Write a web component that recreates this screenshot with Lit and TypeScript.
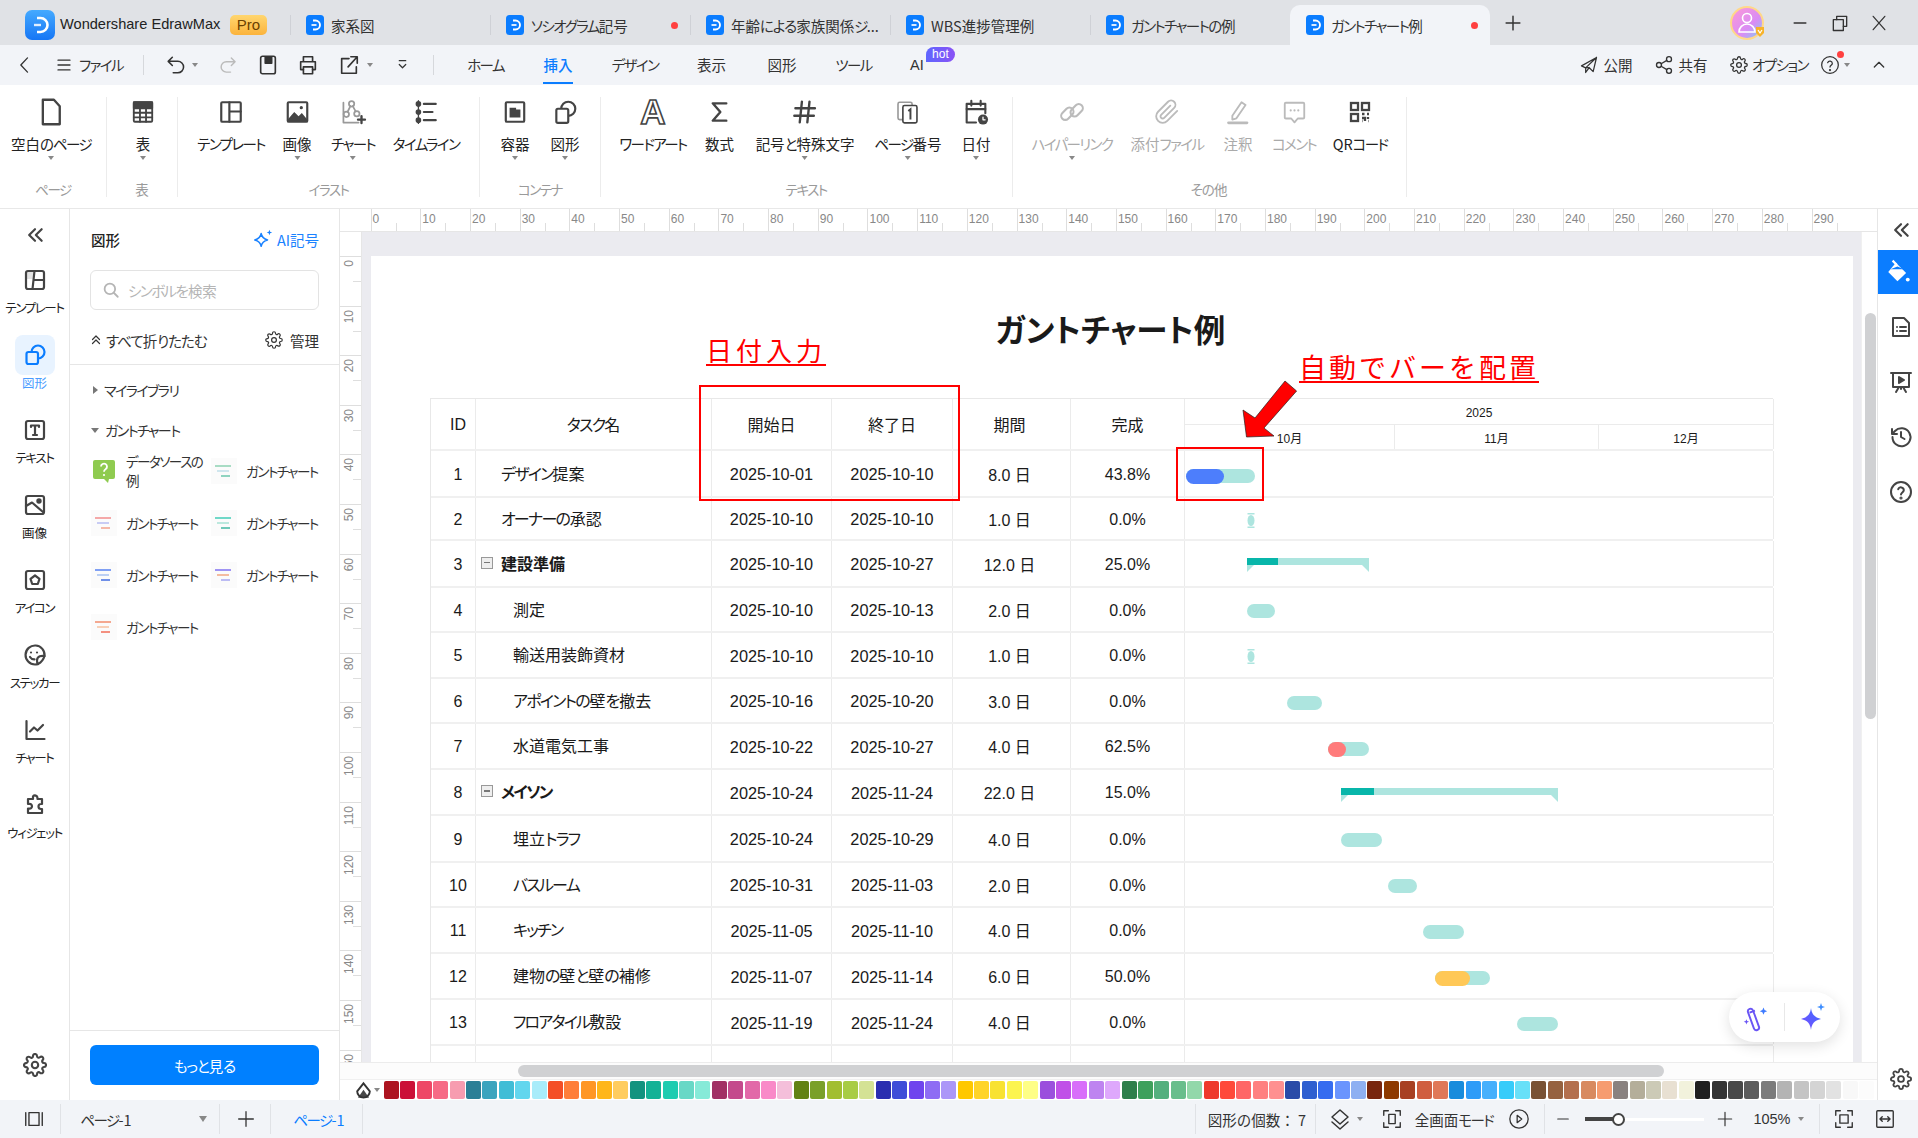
import { LitElement, html, svg, css } from "lit";
import { customElement } from "lit/decorators.js";

type Cell = [number, number, unknown];
const flowRow = (cells: Cell[], origin = 0) => {
  let cur = origin;
  return cells.map(([x, w, c]) => {
    const m = x - cur;
    cur = x + w;
    return html`<div class="cell" style="margin-left:${m}px;width:${w}px">${c}</div>`;
  });
};
const at = (cx: number, w: number, c: unknown): Cell => [cx - w / 2, w, c];

// Kana in the reference is set much tighter than kanji: wrap each run so it can be tightened.
const T = (s: string) =>
  s.split(/([\u30A0-\u30FF]+|[\u3040-\u309F]+)/).map((p) => {
    if (!p) return "";
    if (/^[\u30A0-\u30FF]/.test(p)) return html`<span class="k">${p}</span>`;
    if (/^[\u3040-\u309F]/.test(p)) return html`<span class="h">${p}</span>`;
    return p;
  });

const ico = (inner: unknown, size = 24, sw = 2) =>
  html`<svg width=${size} height=${size} viewBox="0 0 24 24" fill="none" stroke="currentColor" stroke-width=${sw} stroke-linecap="round" stroke-linejoin="round">${inner}</svg>`;

const gearP = svg`<circle cx="12" cy="12" r="3.2"/><path d="M19.4 15a1.65 1.65 0 0 0 .33 1.82l.06.06a2 2 0 0 1 0 2.83 2 2 0 0 1-2.83 0l-.06-.06a1.65 1.65 0 0 0-1.82-.33 1.65 1.65 0 0 0-1 1.51V21a2 2 0 0 1-2 2 2 2 0 0 1-2-2v-.09A1.65 1.65 0 0 0 9 19.4a1.65 1.65 0 0 0-1.82.33l-.06.06a2 2 0 0 1-2.83 0 2 2 0 0 1 0-2.83l.06-.06a1.65 1.65 0 0 0 .33-1.82 1.65 1.65 0 0 0-1.51-1H3a2 2 0 0 1-2-2 2 2 0 0 1 2-2h.09A1.65 1.65 0 0 0 4.6 9a1.65 1.65 0 0 0-.33-1.82l-.06-.06a2 2 0 0 1 0-2.83 2 2 0 0 1 2.83 0l.06.06a1.65 1.65 0 0 0 1.82.33H9a1.65 1.65 0 0 0 1-1.51V3a2 2 0 0 1 2-2 2 2 0 0 1 2 2v.09a1.65 1.65 0 0 0 1 1.51 1.65 1.65 0 0 0 1.82-.33l.06-.06a2 2 0 0 1 2.83 0 2 2 0 0 1 0 2.83l-.06.06a1.65 1.65 0 0 0-.33 1.82V9a1.65 1.65 0 0 0 1.51 1H21a2 2 0 0 1 2 2 2 2 0 0 1-2 2h-.09a1.65 1.65 0 0 0-1.51 1z"/>`;
const dbl = svg`<path d="M12 5l-7 7 7 7M20 5l-7 7 7 7"/>`;
const help = svg`<circle cx="12" cy="12" r="10"/><path d="M9.2 9.2a2.9 2.9 0 0 1 5.6 1c0 2-2.8 2.4-2.8 4.2"/><circle cx="12" cy="18" r=".6"/>`;

const R: Record<string, unknown> = {
  blank: ico(svg`<path d="M5 1.5h9.5L19.5 7v15.5H5z"/>`, 28, 2),
  table: ico(svg`<rect x="3.5" y="3" width="17" height="18" rx="1"/><rect x="3.5" y="3" width="17" height="5.5" fill="currentColor"/><path d="M9.2 8.5V21M14.8 8.5V21M3.5 12.7h17M3.5 16.9h17" stroke-width="1.7"/>`, 26, 1.7),
  tmpl: ico(svg`<rect x="3" y="3" width="18" height="18" rx="1"/><path d="M10.5 3v18M10.5 11.5H21"/>`, 26, 2),
  image: ico(svg`<rect x="3" y="3" width="18" height="18" rx="1"/><path d="M3 19l6-7 4 4 3-3 5 6v2H3z" fill="currentColor" stroke="none"/><circle cx="15.5" cy="8" r="1.5" fill="currentColor" stroke="none"/>`, 26, 2),
  chart: ico(svg`<g stroke="#9a9a9a" stroke-width="1.5"><path d="M4 4v17h13"/><circle cx="11" cy="5" r="2.3"/><circle cx="6.5" cy="14" r="2.3"/><circle cx="15.5" cy="13.5" r="2.3"/><path d="M10 7l-2.5 5M12 7l2.5 4.5"/></g><path d="M19.5 15.5v6M16.5 18.5h6" stroke-width="2"/>`, 28, 2),
  timeline: ico(svg`<circle cx="5" cy="4.5" r="1.6" fill="currentColor"/><circle cx="5" cy="12" r="1.6" fill="currentColor"/><circle cx="5" cy="19.5" r="1.6" fill="currentColor"/><path d="M5 1.5v21" stroke-width="1.2"/><path d="M10 4.5h11M10 12h8M10 19.5h11"/>`, 26, 2),
  container: ico(svg`<rect x="3.5" y="3" width="17" height="18" rx="1"/><path d="M7 8h6v1.8h4V17H7z" fill="currentColor" stroke="none"/>`, 26, 2),
  shape: ico(svg`<circle cx="15" cy="9" r="6.5"/><rect x="4" y="9" width="11" height="13" rx="1.5" fill="#fff"/>`, 26, 2),
  wordart: html`<span class="wa">A</span>`,
  sum: ico(svg`<path d="M18.5 4H6l7 8-7 8h12.5"/>`, 26, 2.2),
  hash: ico(svg`<path d="M9.5 2.5L7.5 21.5M16.5 2.5l-2 19M3.5 8.5h18M2.5 15.5h18"/>`, 26, 2.2),
  pagenum: html`<svg width="26" height="26" viewBox="0 0 24 24" fill="none" stroke="currentColor" stroke-width="1.5"><rect x="3" y="3" width="13" height="16" rx="1.5" stroke="#999"/><rect x="7.5" y="6" width="13" height="16" rx="1.5" fill="#fff"/><path d="M12.500 11l2-1.500V19" stroke-width="1.800"/></svg>`,
  date: ico(svg`<path d="M12 21H4V5h16v8"/><path d="M4 9.5h16M8 2.5v4M16 2.5v4"/><circle cx="18" cy="18.5" r="4.3" fill="currentColor" stroke="none"/><path d="M18 16.5v2.2h1.8" stroke="#fff" stroke-width="1.1"/>`, 28, 1.8),
  link: ico(svg`<rect x="2" y="10" width="12" height="7" rx="3.5" transform="rotate(-45 8 13.5)"/><rect x="10" y="7" width="12" height="7" rx="3.5" transform="rotate(-45 16 10.5)"/>`, 28, 1.8),
  clip: ico(svg`<path d="M21.44 11.05l-9.19 9.19a6 6 0 0 1-8.49-8.49l9.19-9.19a4 4 0 0 1 5.66 5.66l-9.2 9.19a2 2 0 0 1-2.83-2.83l8.49-8.48"/>`, 26, 1.7),
  note: ico(svg`<path d="M7 15.5L15.5 3l3.7 2.5-8.4 12.3L7 19z"/><path d="M3.5 22h17" stroke-width="2.6"/>`, 26, 1.7),
  comment: ico(svg`<path d="M4 3.5h16a1 1 0 0 1 1 1V17a1 1 0 0 1-1 1h-5l-3 3.5L9 18H4a1 1 0 0 1-1-1V4.5a1 1 0 0 1 1-1z"/><path d="M8.5 10.5h.01M12 10.5h.01M15.5 10.5h.01" stroke-width="2"/>`, 26, 1.7),
  qr: html`<svg width="24" height="24" viewBox="0 0 24 24" fill="none" stroke="currentColor" stroke-width="2.3"><rect x="3" y="3" width="7" height="7"/><rect x="14" y="3" width="7" height="7"/><rect x="3" y="14" width="7" height="7"/><path d="M14 14h2.5M19 14h2M14 18h3v3M20 17v2M14 21h.5M20.5 21h.5"/></svg>`,
};

const groups = [
  { name: "ページ", from: 0, to: 107, items: [["空白のページ", 51, "blank", 1]] },
  { name: "表", from: 107, to: 178, items: [["表", 143, "table", 1]] },
  { name: "イラスト", from: 178, to: 480, items: [["テンプレート", 231, "tmpl", 0], ["画像", 297, "image", 1], ["チャート", 353, "chart", 1], ["タイムライン", 426, "timeline", 0]] },
  { name: "コンテナ", from: 480, to: 601, items: [["容器", 515, "container", 1], ["図形", 565, "shape", 1]] },
  { name: "テキスト", from: 601, to: 1012.5, items: [["ワードアート", 653, "wordart", 0], ["数式", 719.5, "sum", 0], ["記号と特殊文字", 805, "hash", 1], ["ページ番号", 908, "pagenum", 1], ["日付", 976, "date", 1]] },
  { name: "その他", from: 1012.5, to: 1406.5, items: [["ハイパーリンク", 1072, "link", 1, 1], ["添付ファイル", 1167, "clip", 0, 1], ["注釈", 1238, "note", 0, 1], ["コメント", 1294, "comment", 0, 1], ["QRコード", 1360, "qr", 0]] },
] as { name: string; from: number; to: number; items: any[][] }[];

const swatches = ("#AD1420,#CB1038,#EE4766,#F66A85,#F79CB0,#2B7F96,#3AA4BE,#40BDD6,#62D6EE,#A8ECFA,#F44E26,#FF7E3A,#FF9624,#FFB61A,#FFCC5E,#12937F,#14B296,#1DCCB0,#68D8C6,#86EAD8,#A23064,#C44A8C,#E269A8,#F98AC8,#F4BFDA,#628214,#7AA028,#A2BE30,#A8CC44,#D4E294,#2A2EB0,#3E4CD8,#6F44EE,#8E6CF4,#AC96F8,#FFC800,#FFD428,#F8E232,#FCF44E,#FEFE86,#9B4FDD,#C050E8,#D86EFA,#BE84F0,#DEA8FC,#2E7F4A,#3EA05C,#54B07E,#68BE8C,#92D8AA,#EE3A2C,#FF4A3A,#FF6666,#FF8080,#FF9090,#2A4BA8,#2F5FD0,#366CF0,#6A94FE,#8EB0F2,#78260E,#8E3A00,#A84022,#D05E40,#E07858,#188CDC,#2E9CF8,#46B0FC,#36CCFA,#68E0F8,#7A5234,#966240,#B4704E,#D88A60,#F69C70,#8A8280,#B4AE9A,#CCCAB6,#E8E0D2,#F2F2DC,#202020,#343434,#484848,#5C5C5C,#7C7C7C,#B4B4B4,#C4C4C4,#D4D4D4,#E2E2E2,#F8F8F8,#FCFCFC").split(",");

type Bar = { k: "pill" | "ms" | "sum"; x0: number; x1: number; y: number; p?: number; c?: string };
const rows: { id: number; name: string; lvl: number; s: string; e: string; d: string; pc: string; h: number; bar?: Bar }[] = [
  { id: 1, name: "デザイン提案", lvl: 0, s: "2025-10-01", e: "2025-10-10", d: "8.0 日", pc: "43.8%", h: 47, bar: { k: "pill", x0: 1185, x1: 1254, y: 468, p: 1223, c: "#4d7efc" } },
  { id: 2, name: "オーナーの承認", lvl: 0, s: "2025-10-10", e: "2025-10-10", d: "1.0 日", pc: "0.0%", h: 43, bar: { k: "ms", x0: 1246, x1: 1253, y: 512 } },
  { id: 3, name: "建設準備", lvl: 1, s: "2025-10-10", e: "2025-10-27", d: "12.0 日", pc: "25.0%", h: 47, bar: { k: "sum", x0: 1246, x1: 1368, y: 557, p: 1276.5 } },
  { id: 4, name: "測定", lvl: 2, s: "2025-10-10", e: "2025-10-13", d: "2.0 日", pc: "0.0%", h: 45, bar: { k: "pill", x0: 1246, x1: 1274, y: 603 } },
  { id: 5, name: "輸送用装飾資材", lvl: 2, s: "2025-10-10", e: "2025-10-10", d: "1.0 日", pc: "0.0%", h: 46, bar: { k: "ms", x0: 1246, x1: 1253, y: 648 } },
  { id: 6, name: "アポイントの壁を撤去", lvl: 2, s: "2025-10-16", e: "2025-10-20", d: "3.0 日", pc: "0.0%", h: 45, bar: { k: "pill", x0: 1286, x1: 1321, y: 695 } },
  { id: 7, name: "水道電気工事", lvl: 2, s: "2025-10-22", e: "2025-10-27", d: "4.0 日", pc: "62.5%", h: 46, bar: { k: "pill", x0: 1327, x1: 1368, y: 741, p: 1345, c: "#ff7b7b" } },
  { id: 8, name: "メイソン", lvl: 1, s: "2025-10-24", e: "2025-11-24", d: "22.0 日", pc: "15.0%", h: 46, bar: { k: "sum", x0: 1340, x1: 1557, y: 787, p: 1373 } },
  { id: 9, name: "埋立トラフ", lvl: 2, s: "2025-10-24", e: "2025-10-29", d: "4.0 日", pc: "0.0%", h: 47, bar: { k: "pill", x0: 1340, x1: 1381, y: 832 } },
  { id: 10, name: "バスルーム", lvl: 2, s: "2025-10-31", e: "2025-11-03", d: "2.0 日", pc: "0.0%", h: 45, bar: { k: "pill", x0: 1387, x1: 1416, y: 878 } },
  { id: 11, name: "キッチン", lvl: 2, s: "2025-11-05", e: "2025-11-10", d: "4.0 日", pc: "0.0%", h: 46, bar: { k: "pill", x0: 1422, x1: 1463, y: 924 } },
  { id: 12, name: "建物の壁と壁の補修", lvl: 2, s: "2025-11-07", e: "2025-11-14", d: "6.0 日", pc: "50.0%", h: 46, bar: { k: "pill", x0: 1434, x1: 1488.5, y: 970, p: 1469, c: "#ffc857" } },
  { id: 13, name: "フロアタイル敷設", lvl: 2, s: "2025-11-19", e: "2025-11-24", d: "4.0 日", pc: "0.0%", h: 46, bar: { k: "pill", x0: 1516, x1: 1557, y: 1016 } },
];

const thumbs = ["#a8dcc4,#cfe6ee,#8fd4c0", "#f4a8a8,#c8ccf4,#f4b8a8", "#70d8c8,#bce8de,#70c8b8", "#80a0f4,#bcd0f4,#7090e8", "#a094f4,#f4bca0,#bcbcf4", "#f4a890,#f8d0b8,#f49080"];
const thumb = (cs: string) => {
  const [a, b, c] = cs.split(",");
  return html`<svg width="26" height="26" viewBox="0 0 26 26" style="flex:none"><rect width="26" height="26" fill="#fbfbfb"/><rect x="4" y="7" width="16" height="2" fill=${a}/><rect x="6" y="12" width="12" height="2" fill=${b}/><rect x="10" y="17" width="9" height="2" fill=${c}/></svg>`;
};
const tabLogo = html`<svg class="tablogo" width="18" height="20" viewBox="0 0 18 20"><rect width="18" height="20" rx="3.5" fill="#0b7dff"/><path d="M7 5.500h2.500a4.500 4.500 0 0 1 0 9H7" fill="none" stroke="#fff" stroke-width="1.900"/><path d="M5.500 10h5" stroke="#fff" stroke-width="1.700"/></svg>`;

@customElement("app-root")
export class AppRoot extends LitElement {
  static styles = css`
    :host { display: block; width: 1918px; height: 1138px; overflow: hidden; position: relative; background: #fff; color: #333;
      font-family: "Noto Sans CJK JP", "Liberation Sans", sans-serif; font-feature-settings: "palt"; font-size: 14px; }
    * { box-sizing: border-box; }
    .k { letter-spacing: -.11em; }
    .h { letter-spacing: -.07em; }
    .wa { font: 700 35px/30px "Liberation Sans", sans-serif; color: #fff; -webkit-text-stroke: 1.6px #444; }
    .app { display: flex; flex-direction: column; height: 100%; }
    .cell { display: flex; align-items: center; justify-content: center; flex: none; height: 100%; position: relative; white-space: nowrap; }
    .title { height: 45px; background: #e0e2e6; display: flex; flex: none; }
    .brand { width: 290px; display: flex; align-items: center; padding: 5px 0 0 25px; flex: none; }
    .brand .nm { margin-left: 5px; font: 14.6px "Liberation Sans", sans-serif; color: #222; width: 170px; padding-left: 0; }
    .pro { width: 37px; height: 20px; border-radius: 5px; background: linear-gradient(180deg, #ffd66f, #fbb33c); color: #6b4000; font: 15px/20px "Liberation Sans", sans-serif; text-align: center; }
    .tab { width: 200px; height: 40px; margin-top: 5px; flex: none; display: flex; align-items: center; padding: 0 12px 0 16px; font-size: 14.5px; color: #333; position: relative; white-space: nowrap; }
    .tab.sep::before { content: ""; position: absolute; left: 0; top: 10px; height: 20px; width: 1px; background: #cfd1d6; }
    .tab.on { background: #f2f4f8; border-radius: 10px 10px 0 0; }
    .tab.on::before { display: none; }
    .tablogo { flex: none; margin-right: 7px; }
    .tab .dot { margin-left: auto; width: 7px; height: 7px; border-radius: 50%; background: #ff4040; flex: none; }
    .winrow { display: flex; flex: 1; height: 45px; color: #333; }
    .menu { height: 40px; background: #f2f4f8; display: flex; flex: none; color: #333; font-size: 14.5px; padding-bottom: 1px; }
    .grayi { color: #bbb; display: flex; }
    .caret { width: 0; height: 0; border-left: 3.5px solid transparent; border-right: 3.5px solid transparent; border-top: 4.5px solid #888; display: block; }
    .vd { width: 1px; height: 20px; background: #d6d8dc; }
    .mtab.on { color: #0b7dff; font-weight: 500; }
    .under { position: absolute; left: 50%; margin-left: -15px; width: 30px; height: 2px; bottom: 0; background: #0b7dff; }
    .ait { font-family: "Liberation Sans", sans-serif; }
    .hot { position: absolute; left: 19px; top: 2px; width: 29px; height: 15px; border-radius: 8px 8px 8px 0; background: linear-gradient(90deg, #5f66ff, #8a52f5); color: #fff; font: 12px/15px "Liberation Sans", sans-serif; text-align: center; }
    .rdot { position: absolute; width: 7px; height: 7px; background: #ff4040; border-radius: 50%; top: 6px; left: -6px; }
    .ribbon { height: 124px; flex: none; background: #fff; border-bottom: 1px solid #e8e8e8; display: flex; padding-top: 12px; }
    .grp { height: 100px; border-right: 1px solid #ececec; display: flex; flex-direction: column; flex: none; }
    .grp .its { flex: 1; display: flex; }
    .grp .gl { height: 14px; line-height: 14px; font-size: 13.5px; text-align: center; color: #9a9a9a; margin-bottom: 1px; }
    .rit { flex: none; display: flex; flex-direction: column; align-items: center; color: #444; }
    .rit .ic { height: 30px; display: flex; align-items: center; justify-content: center; }
    .rit .tx { margin-top: 8px; height: 18px; line-height: 18px; font-size: 14.5px; color: #222; white-space: nowrap; }
    .rit.dis { color: #bbb; }
    .rit.dis .tx { color: #aaa; }
    .rit .caret { margin-top: 3px; }
    .main { flex: 1; display: flex; min-height: 0; }
    .rail { width: 70px; flex: none; border-right: 1px solid #e6e6e6; display: flex; flex-direction: column; align-items: center; padding: 16px 0 23px; color: #444; }
    .rail .top { height: 20px; margin-bottom: 10px; display: flex; align-items: center; }
    .rit2 { width: 69px; height: 75px; padding-top: 5px; display: flex; flex-direction: column; align-items: center; }
    .rit2 .b { width: 40px; height: 40px; border-radius: 8px; display: flex; align-items: center; justify-content: center; }
    .rit2 .t { height: 16px; line-height: 16px; font-size: 12.5px; color: #222; white-space: nowrap; }
    .rit2.on .b { background: #e8f3ff; color: #0b7dff; }
    .rit2.on .t { color: #4a9cff; }
    .grow { margin-top: auto; display: flex; }
    .panel { width: 270px; flex: none; border-right: 1px solid #e6e6e6; display: flex; flex-direction: column; }
    .ph { display: flex; justify-content: space-between; align-items: center; margin: 20px 20px 0 21px; height: 20px; }
    .ph b { font-size: 14.5px; font-weight: 500; color: #222; }
    .ai { display: flex; align-items: center; color: #1a82ff; gap: 3px; font-size: 14.5px; }
    .search { margin: 21px 20px 0; height: 40px; border: 1px solid #e3e3e3; border-radius: 6px; display: flex; align-items: center; padding-left: 11px; color: #b5b5b5; font-size: 14.5px; gap: 8px; }
    .coll { display: flex; justify-content: space-between; align-items: center; margin: 20px 20px 0; height: 20px; font-size: 14.5px; color: #333; }
    .coll span.g { display: flex; align-items: center; gap: 4px; }
    .hr { border-bottom: 1px solid #e6e6e6; height: 15px; flex: none; }
    .tree { display: flex; align-items: center; height: 20px; padding-left: 21px; font-size: 14px; color: #333; gap: 6px; }
    .tri-r { width: 0; height: 0; border-top: 4px solid transparent; border-bottom: 4px solid transparent; border-left: 5px solid #777; margin-left: 2px; }
    .tri-d { width: 0; height: 0; border-left: 4px solid transparent; border-right: 4px solid transparent; border-top: 5px solid #777; }
    .t1 { margin-top: 15px; } .t2 { margin-top: 20px; }
    .shapes { display: grid; grid-template-columns: 120px 120px; grid-auto-rows: 52px; padding-left: 21px; margin-top: 5px; }
    .sh { display: flex; align-items: center; gap: 9px; font-size: 13.5px; color: #333; line-height: 19px; white-space: nowrap; }
    .panelfoot { margin-top: auto; border-top: 1px solid #e6e6e6; height: 70px; padding: 14px 20px 15px; }
    .more { height: 40px; border-radius: 6px; background: #0080ff; color: #fff; font-size: 14.5px; display: flex; align-items: center; justify-content: center; }
    .work { flex: 1; display: flex; flex-direction: column; min-width: 0; }
    .hruler { height: 23px; flex: none; display: flex; padding-left: 30.6px; border-bottom: 1px solid #e6e6e6; overflow: hidden; }
    .ht { width: 49.7px; flex: none; border-left: 1px solid #dedede; position: relative; font: 12px/20px "Liberation Sans", sans-serif; color: #888; padding-left: 1px; }
    .ht::after { content: ""; position: absolute; left: 24px; bottom: 0; height: 8px; width: 1px; background: #dedede; }
    .wb { flex: 1; display: flex; min-height: 0; }
    .vruler { width: 22px; flex: none; border-right: 1px solid #e6e6e6; padding-top: 24px; overflow: hidden; }
    .vt { height: 49.6px; border-top: 1px solid #dedede; position: relative; font: 12px/14px "Liberation Sans", sans-serif; color: #888; }
    .vt span { position: absolute; left: 2px; top: 3px; writing-mode: vertical-rl; transform: rotate(180deg); }
    .vt::after { content: ""; position: absolute; right: 0; top: 24px; width: 8px; height: 1px; background: #dedede; }
    .canvas { flex: 1; background: #ebebf0; padding: 24px 8px 0 9px; display: flex; min-width: 0; overflow: hidden; }
    .page { flex: 1; background: #fff; position: relative; overflow: hidden; padding-top: 52px; }
    .h1 { text-align: center; height: 40px; line-height: 40px; font-size: 31.5px; font-weight: 700; color: #1a1a1a; margin-bottom: 50px; padding-right: 3px; }
    .tbl { margin-left: 59px; width: 1343px; border-top: 1px solid #e8e8e8; border-left: 1px solid #e8e8e8; font: 16px "Liberation Sans", "Noto Sans CJK JP", sans-serif; font-feature-settings: "palt"; color: #1a1a1a; }
    .tr { display: grid; grid-template-columns: 45px 236px 120px 121px 118px 114px 589px; border-bottom: 2px solid #f0f0f0; }
    .td { border-right: 1px solid #ebebeb; display: flex; align-items: center; justify-content: center; position: relative; min-width: 0; white-space: nowrap; padding-top: 2px; }
    .idc { padding-left: 10px; }
    .dur { padding-right: 4px; padding-top: 0; }
    .date { font-size: 16.3px; }
    .nm { justify-content: flex-start; font-family: "Noto Sans CJK JP", sans-serif; font-size: 16px; padding-top: 0; padding-bottom: 2px; }
    .nm.l0 { padding-left: 25px; }
    .nm.l1 { padding-left: 5px; font-weight: 700; }
    .nm.l2 { padding-left: 37px; }
    .mn { width: 12px; height: 12px; border: 1px solid #999; background: #eee; flex: none; margin-right: 8px; position: relative; }
    .mn::after { content: ""; position: absolute; left: 2px; right: 2px; top: 4px; height: 1.5px; background: #777; }
    .jp { font-family: "Noto Sans CJK JP", sans-serif; padding-top: 0; }
    .gh { display: flex; flex-direction: column; padding: 0; align-items: stretch; justify-content: flex-start; }
    .gy { height: 26px; display: flex; align-items: center; justify-content: center; border-bottom: 1px solid #ebebeb; font-size: 12px; padding-top: 3px; }
    .gm { height: 24px; display: flex; font-size: 12px; }
    .gm div { display: flex; align-items: center; justify-content: center; border-right: 1px solid #ebebeb; }
    .m10 { width: 210px; } .m11 { width: 204px; } .m12 { flex: 1; border-right: none !important; }
    .bar { position: absolute; height: 14px; background: #ade5df; }
    .bar.pill { border-radius: 7px; }
    .bar .pg { position: absolute; left: 0; top: -.5px; height: 15px; border-radius: 7.5px; }
    .bar.sum { height: 7px; }
    .bar.sum .pg { top: 0; height: 7px; border-radius: 0; background: #08b6aa; }
    .bar.sum::before, .bar.sum::after { content: ""; position: absolute; top: 7px; width: 7px; height: 7px; background: #ade5df; }
    .bar.sum::before { left: 0; clip-path: polygon(0 0, 100% 0, 0 100%); }
    .bar.sum::after { right: 0; clip-path: polygon(0 0, 100% 0, 100% 100%); }
    .ms { position: absolute; display: block; }
    .rect { position: absolute; border: 2px solid #f00; }
    .r1 { left: 327.5px; top: 129px; width: 261.5px; height: 116px; }
    .r2 { left: 804.5px; top: 191px; width: 88.5px; height: 54px; }
    .note { position: absolute; color: #f00; white-space: nowrap; text-decoration: underline; text-decoration-thickness: 1.5px; text-underline-offset: 3px; font-family: "Liberation Serif", "Noto Sans CJK JP", serif; font-feature-settings: normal; }
    .n1 { left: 335px; top: 80px; font-size: 26px; letter-spacing: 4px; line-height: 34px; }
    .n2 { left: 928px; top: 95px; font-size: 27px; letter-spacing: 3px; line-height: 36px; }
    .arrow { position: absolute; left: 869px; top: 122px; }
    .float { position: absolute; right: 13px; top: 736px; width: 111px; height: 50px; border-radius: 25px; background: #fff; box-shadow: 0 4px 14px rgba(0,0,0,.12); display: flex; align-items: center; justify-content: space-around; padding: 0 6px; }
    .float i { width: 1px; height: 28px; background: #e8e8e8; }
    .vs { width: 16px; flex: none; background: #fff; padding: 81px 2px 0 3px; border-left: 1px solid #f0f0f0; }
    .vs div { height: 406px; background: #d0d1d3; border-radius: 6px; width: 11px; }
    .hs { height: 17px; flex: none; background: #fcfcfc; border-top: 1px solid #ececec; padding: 2px 0 0 178px; }
    .hs div { width: 1146px; height: 12px; background: #d0d1d3; border-radius: 6px; }
    .cols { height: 21px; flex: none; display: flex; align-items: center; padding-left: 14px; background: #fff; border-top: 1px solid #f0f0f0; }
    .paint { width: 30px; flex: none; display: flex; align-items: center; color: #333; gap: 1px; }
    .sw { width: 15px; height: 18px; margin-right: 1.4px; border-radius: 2px; flex: none; }
    .rrail { width: 41px; flex: none; border-left: 1px solid #e6e6e6; display: flex; flex-direction: column; align-items: center; padding: 11px 0 10px; color: #444; }
    .rrail .top { height: 20px; margin: 0 0 10px 5px; display: flex; align-items: center; }
    .rrail .act { width: 40px; height: 44px; background: #0b7dff; color: #fff; display: flex; align-items: center; justify-content: center; margin-bottom: 11px; }
    .rrail .it { height: 44px; margin: 0 0 11px 5px; display: flex; align-items: center; }
    .rrail .grow { margin-left: 5px; }
    .status { height: 38px; flex: none; background: #f2f4f8; display: flex; font-size: 14.5px; color: #333; }
    .status .vd { height: 30px; background: #e0e2e6; }
    .sl { width: 119px; height: 16px; position: relative; display: flex; align-items: center; }
    .sl::before { content: ""; position: absolute; left: 0; right: 0; height: 3px; background: #fff; }
    .sl::after { content: ""; position: absolute; left: 0; width: 30px; height: 4px; background: #444; }
    .sl b { position: absolute; left: 27px; width: 13px; height: 13px; border-radius: 50%; background: #fff; border: 2.5px solid #444; z-index: 1; }
    .blue { color: #0b7dff; }
    .lat { font-family: "Liberation Sans", sans-serif; }
    .cnt { font-feature-settings: normal; font-size: 14.5px; }
  `;

  private header() {
    const tabs: [string, boolean, boolean][] = [["家系図", false, false], ["ソシオグラム記号", true, false], ["年齢による家族関係ジ...", false, false], ["WBS進捗管理例", false, false], ["ガントチャートの例", false, false], ["ガントチャート例", true, true]];
    return html`<div class="title">
      <div class="brand">
        <svg width="30" height="30" viewBox="0 0 30 30" style="flex:none"><defs><linearGradient id="lg" x1="0" y1="0" x2="0" y2="1"><stop offset="0" stop-color="#45aaff"/><stop offset="1" stop-color="#1676f5"/></linearGradient></defs><rect width="30" height="30" rx="7" fill="url(#lg)"/><path d="M12 8h3.500a7 7 0 0 1 0 14H12" fill="none" stroke="#fff" stroke-width="2.600"/><path d="M9 15h7" stroke="#fff" stroke-width="2.400" opacity=".85"/></svg>
        <span class="nm">Wondershare EdrawMax</span><span class="pro">Pro</span>
      </div>
      ${tabs.map(([t, d, on]) => html`<div class="tab sep ${on ? "on" : ""}">${tabLogo}<span>${T(t)}</span>${d ? html`<span class="dot"></span>` : ""}</div>`)}
      <div class="winrow">${flowRow([
        at(1513, 24, ico(svg`<path d="M12 4.500v15M4.500 12h15"/>`, 22, 1.6)),
        at(1748, 38, html`<svg width="38" height="38" viewBox="0 0 38 38"><defs><linearGradient id="av" x1="0" y1="0" x2="1" y2="1"><stop offset="0" stop-color="#ff9ad5"/><stop offset=".6" stop-color="#d98cf5"/><stop offset="1" stop-color="#78d5f0"/></linearGradient></defs><circle cx="18" cy="19" r="16" fill="url(#av)" stroke="#ffd88a" stroke-width="2"/><circle cx="18" cy="14" r="4.500" fill="none" stroke="#fff" stroke-width="1.600"/><path d="M10 28a8 8 0 0 1 16 0z" fill="none" stroke="#fff" stroke-width="1.600"/><path d="M27 23h8v6l-4 4-4-4z" fill="#f7b32b"/><path d="M29 26l2 3 2-3" fill="none" stroke="#fff" stroke-width="1.200"/></svg>`),
        at(1800, 20, ico(svg`<path d="M5 12h14"/>`, 20, 1.8)),
        at(1840, 20, ico(svg`<rect x="4" y="8" width="12" height="13"/><path d="M8 8V4h12v12h-4"/>`, 20, 1.6)),
        at(1879, 20, ico(svg`<path d="M5 4l14 16M19 4L5 20"/>`, 20, 1.5)),
      ], 1490)}</div>
    </div>`;
  }

  private menu() {
    const mt = ["ホーム", "挿入", "デザイン", "表示", "図形", "ツール"];
    const mx = [485.6, 558, 635, 711.6, 782, 853.6];
    return html`<div class="menu">${flowRow([
      at(24.5, 20, ico(svg`<path d="M15 3.500L7 12l8 8.500"/>`, 22, 1.6)),
      at(64, 18, ico(svg`<path d="M4 5.500h16M4 12h16M4 18.500h16"/>`, 18, 1.7)),
      [80, 42, html`<span>${T("ファイル")}</span>`],
      at(143, 1, html`<div class="vd"></div>`),
      at(176, 22, ico(svg`<path d="M8 3.500L3.500 8 8 12.500M3.500 8H14a6.200 6.200 0 0 1 0 12.500H9"/>`, 22, 1.7)),
      at(195, 8, html`<span class="caret"></span>`),
      at(228, 20, html`<span class="grayi">${ico(svg`<path d="M16 3.500L20.500 8 16 12.500M20.500 8H10a6.200 6.200 0 0 0 0 12.500h5"/>`, 20, 1.7)}</span>`),
      at(268, 22, ico(svg`<rect x="4" y="2.500" width="16" height="19" rx="2"/><rect x="9" y="3" width="7" height="7" fill="currentColor"/>`, 22, 1.8)),
      at(308, 22, ico(svg`<path d="M7 8V3h10v5M7 17H4V8.500h16V17h-3"/><rect x="7" y="14" width="10" height="7.500"/>`, 22, 1.8)),
      at(349, 22, ico(svg`<path d="M20 14v7H4V5h8M14 3h7v7M21 3L11 14"/>`, 22, 1.8)),
      at(370, 8, html`<span class="caret"></span>`),
      at(402, 14, ico(svg`<path d="M6 5h12M6 12l6 6 6-6"/>`, 13, 2.2)),
      at(433.5, 1, html`<div class="vd"></div>`),
      ...mt.map((t, i) => at(mx[i], 50, html`<span class="mtab ${i == 1 ? "on" : ""}">${T(t)}</span>${i == 1 ? html`<span class="under"></span>` : ""}`)),
      at(917, 20, html`<span class="ait">AI</span><span class="hot">hot</span>`),
      at(1589, 20, ico(svg`<path d="M21 3L3 13l5 2.500M21 3l-4 17-5-5-4 .5V21l4-5.500M21 3L8 15.500"/>`, 20, 1.5)),
      [1603, 30, html`<span>公開</span>`],
      at(1664, 20, ico(svg`<circle cx="18" cy="5" r="3"/><circle cx="6" cy="12" r="3"/><circle cx="18" cy="19" r="3"/><path d="M8.600 10.500l6.800-4M8.600 13.500l6.800 4"/>`, 20, 1.6)),
      [1678, 30, html`<span>共有</span>`],
      at(1739, 20, ico(gearP, 18, 1.7)),
      [1753, 54, html`<span>${T("オプション")}</span>`],
      at(1830, 20, ico(help, 20, 1.5)),
      at(1847, 8, html`<span class="caret"></span><span class="rdot"></span>`),
      at(1879, 16, ico(svg`<path d="M5 15l7-7 7 7"/>`, 16, 2)),
    ])}</div>`;
  }

  private ribbon() {
    return html`<div class="ribbon">${groups.map((g) => {
      const xs = g.items.map((it) => it[1] as number);
      let cur = g.from;
      return html`<div class="grp" style="width:${g.to - g.from}px"><div class="its">${g.items.map((it, i) => {
        const cx = xs[i];
        const half = xs.length == 1 ? 40 : i == 0 ? (xs[1] - cx) / 2 : cx - (xs[i - 1] + cx) / 2;
        const rHalf = xs.length == 1 ? 40 : i == xs.length - 1 ? half : (xs[i + 1] - cx) / 2;
        const w = half + rHalf;
        const ml = cx - half - cur;
        cur = cx + rHalf;
        const shift = `transform:translateX(${(half - rHalf) / 2}px)`;
        return html`<div class="rit ${it[4] ? "dis" : ""}" style="width:${w}px;margin-left:${ml}px"><div class="ic" style=${shift}>${R[it[2] as string]}</div><div class="tx" style=${shift}>${T(it[0] as string)}</div>${it[3] ? html`<span class="caret" style=${shift}></span>` : ""}</div>`;
      })}</div><div class="gl">${T(g.name)}</div></div>`;
    })}</div>`;
  }

  private leftRail() {
    const items: [string, unknown, boolean?][] = [
      ["テンプレート", svg`<rect x="3" y="3" width="18" height="18" rx="2"/><path d="M11.500 3L9.500 21M10.500 12H21"/><path d="M4 4h6.500l-1 7H4z" fill="currentColor" stroke="none" opacity=".15"/>`],
      ["図形", svg`<circle cx="15" cy="9" r="6.500"/><rect x="3.500" y="9" width="11.500" height="12" rx="2" fill="#e8f3ff"/>`, true],
      ["テキスト", svg`<rect x="3" y="3" width="18" height="18" rx="2"/><path d="M8 9V7.500h8V9M12 7.500V17M10 17h4" stroke-width="2.200"/>`],
      ["画像", svg`<rect x="3" y="3" width="18" height="18" rx="2"/><path d="M3 13l6-3.500L20 19" /><circle cx="16" cy="8" r="1.600" fill="currentColor"/>`],
      ["アイコン", svg`<rect x="3" y="3" width="18" height="18" rx="2"/><path d="M12 7.500l4.500 3.300-1.700 5.200H9.200l-1.700-5.200z"/>`],
      ["ステッカー", svg`<path d="M21.500 13A9.500 9.500 0 1 0 12 21.500c1 0 2-.2 3-.5 3-1.500 5.500-4.500 6.500-8z"/><path d="M21.500 13c-3-.5-7 0-7.500 4-.1 1.500.3 3 1 4M8 9.500h.01M14 9.500h.01M7 14c1 1.600 2.600 2.500 4.500 2.400"/>`],
      ["チャート", svg`<path d="M3.500 3v18h18"/><path d="M7 13.500l4-4 3.500 3L20 7"/>`],
      ["ウィジェット", svg`<path d="M10 3.500a2.500 2.500 0 0 1 4.500 1.500V6H19v5h-1a2.500 2.500 0 1 0 0 5h1v4H5v-4.500h1.200a2.300 2.300 0 1 0 0-4.500H5V6h5z"/>`],
    ];
    return html`<div class="rail">
      <div class="top">${ico(dbl, 20, 2.6)}</div>
      ${items.map(([t, p, on]) => html`<div class="rit2 ${on ? "on" : ""}"><div class="b">${ico(p, 24, 2.2)}</div><div class="t">${T(t)}</div></div>`)}
      <div class="grow">${ico(gearP, 24, 2.1)}</div>
    </div>`;
  }

  private panel() {
    return html`<div class="panel">
      <div class="ph"><b>図形</b><span class="ai">${ico(svg`<path d="M10 6c.7 4 2.500 6 7 7-4.500 1-6.300 3-7 7-.7-4-2.500-6-7-7 4.500-1 6.300-3 7-7z"/><path d="M19 2l.8 2.200L22 5l-2.200.8L19 8l-.8-2.200L16 5l2.200-.8z" fill="currentColor" stroke="none"/>`, 22, 1.6)}<span>AI記号</span></span></div>
      <div class="search">${ico(svg`<circle cx="10.500" cy="10.500" r="7"/><path d="M16 16l5 5"/>`, 18, 2.4)}<span>${T("シンボルを検索")}</span></div>
      <div class="coll"><span class="g">${ico(svg`<path d="M5 11l7-7 7 7M5 19l7-7 7 7"/>`, 12, 2.4)}<span>${T("すべて折りたたむ")}</span></span><span class="g" style="gap:7px">${ico(gearP, 18, 1.6)}<span>管理</span></span></div>
      <div class="hr"></div>
      <div class="tree t1"><i class="tri-r"></i><span>${T("マイライブラリ")}</span></div>
      <div class="tree t2"><i class="tri-d"></i><span>${T("ガントチャート")}</span></div>
      <div class="shapes">
        <div class="sh"><svg width="26" height="26" viewBox="0 0 26 26" style="flex:none"><path d="M4 2h18a2 2 0 0 1 2 2v15a2 2 0 0 1-2 2h-4l-1 4-4-4H4a2 2 0 0 1-2-2V4a2 2 0 0 1 2-2z" fill="#8fcb50"/><path d="M10 8.500a3 3 0 1 1 4.500 2.700c-1 .6-1.500 1.300-1.500 2.500" fill="none" stroke="#fff" stroke-width="1.800"/><circle cx="13" cy="17" r="1.100" fill="#fff"/></svg><span>${T("データソースの")}<br />例</span></div>
        ${thumbs.map((c) => html`<div class="sh">${thumb(c)}<span>${T("ガントチャート")}</span></div>`)}
      </div>
      <div class="panelfoot"><div class="more">${T("もっと見る")}</div></div>
    </div>`;
  }

  private barEl(b: Bar, top: number) {
    const left = b.x0 - 1184, w = b.x1 - b.x0, y = b.y - top;
    if (b.k == "ms") {
      return html`<svg class="ms" style="left:${left}px;top:${y}px" width="8" height="15" viewBox="0 0 8 15" fill="#ade5df"><rect x="0.500" y="0" width="7" height="1.500"/><rect x="0.500" y="13.500" width="7" height="1.500"/><ellipse cx="4" cy="7.500" rx="3.500" ry="5.500"/></svg>`;
    }
    return html`<div class="bar ${b.k}" style="left:${left}px;top:${y}px;width:${w}px">${b.p ? html`<div class="pg" style="width:${b.p - b.x0}px;${b.c ? `background:${b.c}` : ""}"></div>` : ""}</div>`;
  }

  private table() {
    let top = 450;
    return html`<div class="tbl">
      <div class="tr" style="height:52px">
        <div class="td idc">ID</div><div class="td jp">${T("タスク名")}</div><div class="td jp">開始日</div><div class="td jp">終了日</div><div class="td jp dur">期間</div><div class="td jp">完成</div>
        <div class="td gh"><div class="gy">2025</div><div class="gm"><div class="m10">10月</div><div class="m11">11月</div><div class="m12">12月</div></div></div>
      </div>
      ${rows.map((r) => {
        const t = top;
        top += r.h;
        return html`<div class="tr" style="height:${r.h}px">
          <div class="td idc">${r.id}</div>
          <div class="td nm l${r.lvl}">${r.lvl == 1 ? html`<i class="mn"></i>` : ""}${T(r.name)}</div>
          <div class="td date">${r.s}</div><div class="td date">${r.e}</div><div class="td dur">${r.d}</div><div class="td">${r.pc}</div>
          <div class="td">${r.bar ? this.barEl(r.bar, t) : ""}</div>
        </div>`;
      })}
      <div class="tr" style="height:46px"><div class="td"></div><div class="td"></div><div class="td"></div><div class="td"></div><div class="td"></div><div class="td"></div><div class="td"></div></div>
    </div>`;
  }

  private status() {
    const vd = html`<div class="vd"></div>`;
    const car = html`<span class="caret"></span>`;
    return html`<div class="status">${flowRow([
      at(34, 24, ico(svg`<path d="M3 5v14M21 5v14"/><rect x="6.500" y="5" width="11" height="14"/>`, 22, 1.5)),
      at(60.6, 1, vd),
      [81, 50, html`<span>${T("ページ")}-1</span>`],
      at(203, 10, html`<span class="caret" style="border-left-width:4px;border-right-width:4px;border-top-width:6px"></span>`),
      at(220, 1, vd),
      at(246, 22, ico(svg`<path d="M12 4v16M4 12h16"/>`, 22, 1.4)),
      at(271, 1, vd),
      [294, 50, html`<span class="blue">${T("ページ")}-1</span>`],
      at(362.500, 1, vd),
      at(1196, 1, vd),
      [1207, 100, html`<span class="cnt">図形の個数： 7</span>`],
      at(1315.500, 1, vd),
      at(1340, 24, ico(svg`<path d="M12 3l8 7-8 7-8-7z"/><path d="M4 15l8 7 8-7"/>`, 24, 1.5)),
      at(1360, 8, car),
      at(1392, 24, ico(svg`<path d="M8 3H3v5M16 3h5v5M8 21H3v-5M16 21h5v-5"/><rect x="8.500" y="7" width="7" height="10"/>`, 22, 1.5)),
      [1413, 82, html`<span>全画面${T("モード")}</span>`],
      at(1519, 24, ico(svg`<circle cx="12" cy="12" r="10"/><path d="M10 8l5 4-5 4z"/>`, 22, 1.4)),
      at(1544.600, 1, vd),
      at(1563.500, 18, ico(svg`<path d="M5 12h14"/>`, 18, 1.6)),
      [1585, 119, html`<div class="sl"><b></b></div>`],
      at(1725, 20, ico(svg`<path d="M12 4v16M4 12h16"/>`, 20, 1.4)),
      [1754, 36, html`<span class="lat">105%</span>`],
      at(1801, 8, car),
      at(1819.500, 1, vd),
      at(1844.500, 24, ico(svg`<path d="M8 3H3v5M16 3h5v5M8 21H3v-5M16 21h5v-5"/><rect x="7.500" y="7.500" width="9" height="9"/>`, 22, 1.5)),
      at(1885, 24, ico(svg`<rect x="3" y="3" width="18" height="18" rx="1"/><path d="M7 12h10M9 9.500L6.500 12 9 14.500M15 9.500l2.500 2.500-2.500 2.500"/>`, 22, 1.5)),
    ])}</div>`;
  }

  render() {
    const hT = Array.from({ length: 30 }, (_, i) => i * 10);
    const vT = Array.from({ length: 17 }, (_, i) => i * 10);
    return html`<div class="app">
      ${this.header()}${this.menu()}${this.ribbon()}
      <div class="main">
        ${this.leftRail()}${this.panel()}
        <div class="work">
          <div class="hruler">${hT.map((n) => html`<div class="ht">${n}</div>`)}</div>
          <div class="wb">
            <div class="vruler">${vT.map((n) => html`<div class="vt"><span>${n}</span></div>`)}</div>
            <div class="canvas"><div class="page">
              <div class="h1">ガントチャート例</div>
              ${this.table()}
              <div class="rect r1"></div><div class="rect r2"></div>
              <div class="note n1">日付入力</div>
              <div class="note n2">自動でバーを配置</div>
              <svg class="arrow" width="60" height="62" viewBox="0 0 60 62"><polygon points="6.500,59 3,32 15,40 45,3 56.600,13 24,50 34,58" fill="#f00" stroke="#222" stroke-width=".7"/></svg>
              <div class="float">
                <svg width="28" height="32" viewBox="0 0 26 30" fill="none" stroke="#6a55f5" stroke-width="1.800"><rect x="8" y="7" width="5" height="21" rx="2.500" transform="rotate(-20 10 17)"/><path d="M7 11l5-2" /><path d="M20 6l1 2.500 2.500 1-2.500 1-1 2.500-1-2.500-2.500-1 2.500-1z" fill="#3f7cff" stroke="none"/><path d="M4 17l.7 1.800 1.800.7-1.800.7-.7 1.800-.7-1.800-1.800-.7 1.800-.7z" fill="#6a55f5" stroke="none"/></svg>
                <i></i>
                <svg width="28" height="30" viewBox="0 0 28 30"><defs><linearGradient id="sp" x1="0" y1="1" x2="1" y2="0"><stop offset="0" stop-color="#7a4dff"/><stop offset="1" stop-color="#3d6dff"/></linearGradient></defs><path d="M12 6c.8 6 3 9 10 11-7 1.500-9.200 5-10 11-.8-6-3-9.500-10-11 7-2 9.200-5 10-11z" fill="url(#sp)"/><path d="M22 1l1 3 3 1-3 1-1 3-1-3-3-1 3-1z" fill="#3d8dff"/></svg>
              </div>
            </div></div>
            <div class="vs"><div></div></div>
          </div>
          <div class="hs"><div></div></div>
          <div class="cols">
            <div class="paint"><svg width="19" height="19" viewBox="0 0 24 24" fill="none" stroke="currentColor" stroke-width="2.400"><path d="M12 3l8 10a8 8 0 0 1-16 0z"/><path d="M12 11l-7 10h14z" fill="currentColor" stroke="none" opacity=".9"/></svg><span class="caret" style="border-top-width:4px"></span></div>
            ${swatches.map((c) => html`<div class="sw" style="background:${c}"></div>`)}
          </div>
        </div>
        <div class="rrail">
          <div class="top">${ico(dbl, 20, 2.6)}</div>
          <div class="act"><svg width="26" height="26" viewBox="0 0 24 24"><path d="M10 3.500l9.500 9.500-8 7.500L3 12z" fill="#fff"/><path d="M5 9.500h12.500L11.500 7z" fill="#0b7dff"/><path d="M7 1.500l4 4" stroke="#fff" stroke-width="2"/><circle cx="21" cy="19" r="1.800" fill="#fff"/></svg></div>
          <div class="it">${ico(svg`<path d="M4 3h11l5 5v13H4z"/><path d="M8 12h.01M11 12h6M8 16h.01M11 16h6" stroke-width="2"/>`, 24, 2)}</div>
          <div class="it">${ico(svg`<path d="M2 3h20M4 3v14h16V3M12 17v2M7 22l3-5M17 22l-3-5"/><path d="M10 7l5 3-5 3z" fill="currentColor"/>`, 24, 2)}</div>
          <div class="it">${ico(svg`<path d="M3.500 12A9 9 0 1 0 6 6l-3 3M3 4v5h5"/><path d="M12 7v5l3.500 2"/>`, 24, 2)}</div>
          <div class="it">${ico(help, 24, 2)}</div>
          <div class="grow">${ico(gearP, 22, 2)}</div>
        </div>
      </div>
      ${this.status()}
    </div>`;
  }
}
